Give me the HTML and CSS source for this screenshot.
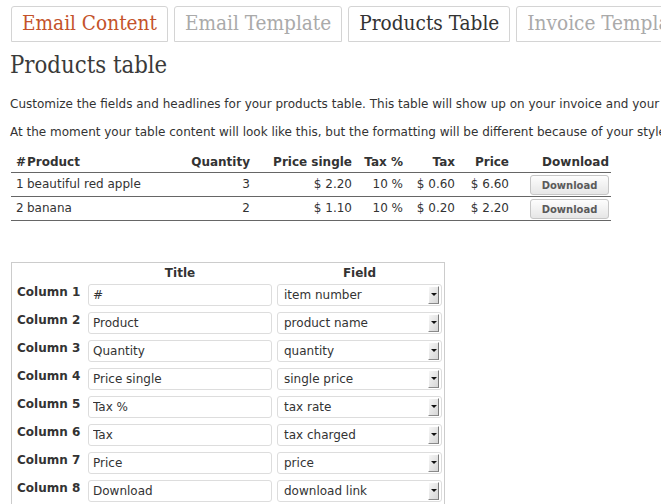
FILE: index.html
```html
<!DOCTYPE html>
<html lang="en">
<head>
<meta charset="utf-8">
<title>Products table</title>
<link rel="stylesheet" href="styles.css">
</head>
<body>
<div class="wrap">
  <nav class="tabs">
    <a class="tab tab-email">Email Content</a>
    <a class="tab">Email Template</a>
    <a class="tab tab-active">Products Table</a>
    <a class="tab">Invoice Template</a>
  </nav>

  <h2 class="title">Products table</h2>
  <p class="intro">Customize the fields and headlines for your products table. This table will show up on your invoice and your emails.</p>
  <p class="intro">At the moment your table content will look like this, but the formatting will be different because of your style settings.</p>

  <table class="preview">
    <colgroup>
      <col class="c-num"><col class="c-prod"><col class="c-qty"><col class="c-single"><col class="c-rate"><col class="c-tax"><col class="c-price"><col class="c-dl">
    </colgroup>
    <thead>
      <tr>
        <th class="l first">#</th>
        <th class="l prod">Product</th>
        <th>Quantity</th>
        <th>Price single</th>
        <th>Tax %</th>
        <th>Tax</th>
        <th>Price</th>
        <th>Download</th>
      </tr>
    </thead>
    <tbody>
      <tr>
        <td class="l first">1</td>
        <td class="l prod">beautiful red apple</td>
        <td>3</td>
        <td>$ 2.20</td>
        <td>10 %</td>
        <td>$ 0.60</td>
        <td>$ 6.60</td>
        <td><button class="btn" type="button">Download</button></td>
      </tr>
      <tr>
        <td class="l first">2</td>
        <td class="l prod">banana</td>
        <td>2</td>
        <td>$ 1.10</td>
        <td>10 %</td>
        <td>$ 0.20</td>
        <td>$ 2.20</td>
        <td><button class="btn" type="button">Download</button></td>
      </tr>
    </tbody>
  </table>

  <div class="fields">
    <div class="fields-head">
      <span></span>
      <span class="fh">Title</span>
      <span class="fh">Field</span>
    </div>
    <div class="fields-body">
      <label class="flabel">Column 1</label>
      <input class="finput" type="text" value="#">
      <div class="fselect"><span>item number</span><span class="arrow"></span></div>

      <label class="flabel">Column 2</label>
      <input class="finput" type="text" value="Product">
      <div class="fselect"><span>product name</span><span class="arrow"></span></div>

      <label class="flabel">Column 3</label>
      <input class="finput" type="text" value="Quantity">
      <div class="fselect"><span>quantity</span><span class="arrow"></span></div>

      <label class="flabel">Column 4</label>
      <input class="finput" type="text" value="Price single">
      <div class="fselect"><span>single price</span><span class="arrow"></span></div>

      <label class="flabel">Column 5</label>
      <input class="finput" type="text" value="Tax %">
      <div class="fselect"><span>tax rate</span><span class="arrow"></span></div>

      <label class="flabel">Column 6</label>
      <input class="finput" type="text" value="Tax">
      <div class="fselect"><span>tax charged</span><span class="arrow"></span></div>

      <label class="flabel">Column 7</label>
      <input class="finput" type="text" value="Price">
      <div class="fselect"><span>price</span><span class="arrow"></span></div>

      <label class="flabel">Column 8</label>
      <input class="finput" type="text" value="Download">
      <div class="fselect"><span>download link</span><span class="arrow"></span></div>

      <label class="flabel">Column 9</label>
      <input class="finput" type="text" value="">
      <div class="fselect"><span></span><span class="arrow"></span></div>
    </div>
  </div>
</div>
</body>
</html>
```

FILE: styles.css
```css
html, body {
  margin: 0;
  padding: 0;
  overflow: hidden;
  background: #ffffff;
}

body {
  font-family: "DejaVu Sans", "Liberation Sans", sans-serif;
  font-size: 12px;
  color: #333333;
}

.wrap {
  padding: 0 0 0 10px;
  width: 900px;
}

/* Tabs */
.tabs {
  display: flex;
  gap: 6px;
  margin: 6px 0 0 1px;
  white-space: nowrap;
}

.tab {
  flex: none;
  display: block;
  box-sizing: border-box;
  height: 36px;
  padding: 0 10px 2px;
  border: 1px solid #d4d4d4;
  border-radius: 3px 3px 0 0;
  background: #ffffff;
  font-family: "DejaVu Serif Condensed", "DejaVu Serif", serif;
  font-stretch: condensed;
  font-size: 20.6px;
  line-height: 32px;
  color: #aaaaaa;
}

.tab-email {
  color: #c4532b;
}

.tab-active {
  color: #333333;
}

/* Heading */
.title {
  margin: 10px 0 0;
  font-family: "DejaVu Serif Condensed", "DejaVu Serif", serif;
  font-stretch: condensed;
  font-weight: normal;
  font-size: 23.7px;
  line-height: 27px;
  color: #3a3a3a;
}

.intro {
  margin: 17px 0 0;
  line-height: 17px;
  white-space: nowrap;
}

.intro + .intro {
  margin-top: 11px;
}

/* Preview table */
.preview {
  margin: 12px 0 0 1px;
  width: 600px;
  table-layout: fixed;
  border-collapse: collapse;
  font-size: 12px;
  color: #333333;
}

.c-num { width: 15px; }
.c-prod { width: 161px; }
.c-qty { width: 65px; }
.c-single { width: 102px; }
.c-rate { width: 51px; }
.c-tax { width: 52px; }
.c-price { width: 54px; }
.c-dl { width: 100px; }

.preview th,
.preview td {
  padding: 2px 2px;
  text-align: right;
  border-bottom: 1px solid #666666;
  white-space: nowrap;
  line-height: 15px;
}

.preview th {
  font-weight: bold;
}

.preview td {
  padding-top: 0;
  padding-bottom: 0;
  height: 23px;
  vertical-align: middle;
}

.preview .l {
  text-align: left;
}

.preview .first {
  padding-left: 5px;
  padding-right: 0;
}

.preview .prod {
  padding-left: 1px;
}

.btn {
  display: block;
  box-sizing: border-box;
  width: 79px;
  height: 20px;
  padding: 0;
  margin: 2px 0 1px auto;
  border: 1px solid #c6c6c6;
  border-radius: 3px;
  background: linear-gradient(#fdfdfd, #e6e6e6);
  font-family: "DejaVu Sans", "Liberation Sans", sans-serif;
  font-size: 10px;
  font-weight: bold;
  color: #5a5a5a;
}

/* Field editor */
.fields {
  margin: 41px 0 0 1px;
  width: 434px;
  box-sizing: border-box;
  border: 1px solid #cccccc;
  border-bottom: none;
  padding: 1px 2px 8px 5px;
}

.fields-head,
.fields-body {
  display: grid;
  grid-template-columns: 66px 184px 165px;
  column-gap: 5px;
}

.fields-head {
  height: 20px;
}

.fh {
  font-weight: bold;
  text-align: center;
  line-height: 19px;
}

.fields-body {
  row-gap: 6px;
}

.flabel {
  font-weight: bold;
  line-height: 17px;
  align-self: start;
  white-space: nowrap;
  color: #333333;
}

.finput {
  box-sizing: border-box;
  width: 184px;
  height: 22px;
  margin: 0;
  padding: 0 4px;
  border: 1px solid #dddddd;
  border-radius: 3px;
  background: #ffffff;
  font-family: "DejaVu Sans", "Liberation Sans", sans-serif;
  font-size: 12px;
  color: #333333;
  outline: none;
}

.fselect {
  box-sizing: border-box;
  height: 22px;
  display: flex;
  align-items: center;
  justify-content: space-between;
  padding: 0 2px 0 6px;
  border: 1px solid #dddddd;
  border-radius: 3px;
  background: #ffffff;
  color: #333333;
  white-space: nowrap;
}

.arrow {
  flex: none;
  box-sizing: border-box;
  position: relative;
  width: 11px;
  height: 18px;
  background: linear-gradient(to bottom right, #f6f6f6, #d6d6d6);
  border-right: 1px solid #7a7a7a;
  border-bottom: 1px solid #8a8a8a;
  border-top: 1px solid #ffffff;
  border-left: 1px solid #ffffff;
}

.arrow::after {
  content: "";
  position: absolute;
  left: 2px;
  top: 6px;
  border-left: 3px solid transparent;
  border-right: 3px solid transparent;
  border-top: 3px solid #111111;
}
```
